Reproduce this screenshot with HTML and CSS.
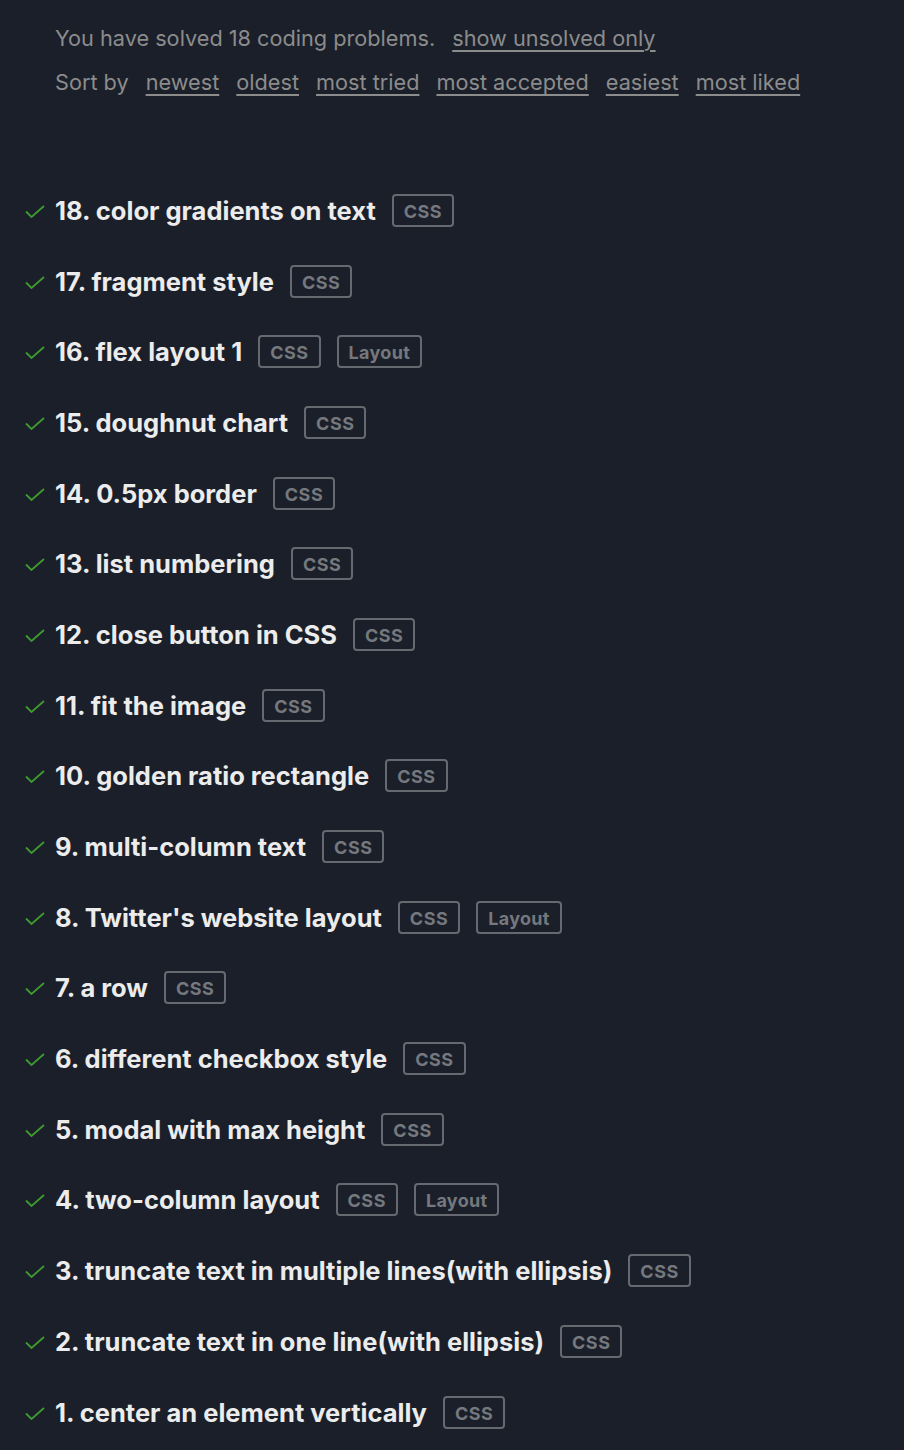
FILE: index.html
```html
<!DOCTYPE html>
<html>
<head>
<meta charset="utf-8">
<link rel="stylesheet" href="styles.css">
</head>
<body>
<div class="page">
  <div class="header">
    <div class="line">
      <span>You have solved 18 coding problems.</span>
      <a class="link" href="#">show unsolved only</a>
    </div>
    <div class="line">
      <span>Sort by</span>
      <a class="link" href="#">newest</a>
      <a class="link" href="#">oldest</a>
      <a class="link" href="#">most tried</a>
      <a class="link" href="#">most accepted</a>
      <a class="link" href="#">easiest</a>
      <a class="link" href="#">most liked</a>
    </div>
  </div>
  <ul class="list">
    <li class="row"><svg class="check" viewBox="0 0 20 13"><path d="M1 6.5 L6.5 12 L19 1"/></svg><span class="title">18. color gradients on text</span><span class="tag">css</span></li>
    <li class="row"><svg class="check" viewBox="0 0 20 13"><path d="M1 6.5 L6.5 12 L19 1"/></svg><span class="title">17. fragment style</span><span class="tag">css</span></li>
    <li class="row"><svg class="check" viewBox="0 0 20 13"><path d="M1 6.5 L6.5 12 L19 1"/></svg><span class="title">16. flex layout 1</span><span class="tag">css</span><span class="tag cap">Layout</span></li>
    <li class="row"><svg class="check" viewBox="0 0 20 13"><path d="M1 6.5 L6.5 12 L19 1"/></svg><span class="title">15. doughnut chart</span><span class="tag">css</span></li>
    <li class="row"><svg class="check" viewBox="0 0 20 13"><path d="M1 6.5 L6.5 12 L19 1"/></svg><span class="title">14. 0.5px border</span><span class="tag">css</span></li>
    <li class="row"><svg class="check" viewBox="0 0 20 13"><path d="M1 6.5 L6.5 12 L19 1"/></svg><span class="title">13. list numbering</span><span class="tag">css</span></li>
    <li class="row"><svg class="check" viewBox="0 0 20 13"><path d="M1 6.5 L6.5 12 L19 1"/></svg><span class="title">12. close button in CSS</span><span class="tag">css</span></li>
    <li class="row"><svg class="check" viewBox="0 0 20 13"><path d="M1 6.5 L6.5 12 L19 1"/></svg><span class="title">11. fit the image</span><span class="tag">css</span></li>
    <li class="row"><svg class="check" viewBox="0 0 20 13"><path d="M1 6.5 L6.5 12 L19 1"/></svg><span class="title">10. golden ratio rectangle</span><span class="tag">css</span></li>
    <li class="row"><svg class="check" viewBox="0 0 20 13"><path d="M1 6.5 L6.5 12 L19 1"/></svg><span class="title">9. multi-column text</span><span class="tag">css</span></li>
    <li class="row"><svg class="check" viewBox="0 0 20 13"><path d="M1 6.5 L6.5 12 L19 1"/></svg><span class="title">8. Twitter's website layout</span><span class="tag">css</span><span class="tag cap">Layout</span></li>
    <li class="row"><svg class="check" viewBox="0 0 20 13"><path d="M1 6.5 L6.5 12 L19 1"/></svg><span class="title">7. a row</span><span class="tag">css</span></li>
    <li class="row"><svg class="check" viewBox="0 0 20 13"><path d="M1 6.5 L6.5 12 L19 1"/></svg><span class="title">6. different checkbox style</span><span class="tag">css</span></li>
    <li class="row"><svg class="check" viewBox="0 0 20 13"><path d="M1 6.5 L6.5 12 L19 1"/></svg><span class="title">5. modal with max height</span><span class="tag">css</span></li>
    <li class="row"><svg class="check" viewBox="0 0 20 13"><path d="M1 6.5 L6.5 12 L19 1"/></svg><span class="title">4. two-column layout</span><span class="tag">css</span><span class="tag cap">Layout</span></li>
    <li class="row"><svg class="check" viewBox="0 0 20 13"><path d="M1 6.5 L6.5 12 L19 1"/></svg><span class="title">3. truncate text in multiple lines(with ellipsis)</span><span class="tag">css</span></li>
    <li class="row"><svg class="check" viewBox="0 0 20 13"><path d="M1 6.5 L6.5 12 L19 1"/></svg><span class="title">2. truncate text in one line(with ellipsis)</span><span class="tag">css</span></li>
    <li class="row"><svg class="check" viewBox="0 0 20 13"><path d="M1 6.5 L6.5 12 L19 1"/></svg><span class="title">1. center an element vertically</span><span class="tag">css</span></li>
  </ul>
</div>
</body>
</html>
```

FILE: styles.css
```css
html, body {
  margin: 0;
  padding: 0;
  background: #1a1f2a;
}
body {
  font-family: Inter, "Noto Sans", sans-serif;
  color: #ececec;
}
.page {
  padding: 16px 0 0 0;
}
.header {
  padding-left: 55px;
  color: #8c8c8c;
  font-size: 21.7px;
}
.line {
  display: flex;
  gap: 17px;
  height: 44px;
  align-items: center;
}
.link {
  color: #8c8c8c;
  text-decoration: underline;
  text-decoration-thickness: 2px;
  text-underline-offset: 4px;
}
.list {
  list-style: none;
  margin: 71px 0 0 0;
  padding: 0 0 0 25px;
}
.row {
  display: flex;
  align-items: center;
  height: 70.7px;
}
.check {
  width: 20px;
  height: 13px;
  margin-right: 10px;
  margin-top: 2px;
  fill: none;
  stroke: #3f9b2f;
  stroke-width: 1.8;
}
.title {
  font-size: 25.5px;
  font-weight: 700;
  color: #ececec;
  margin-right: 16px;
}
.tag {
  box-sizing: border-box;
  height: 33px;
  padding: 2px 10px 0;
  border: 2px solid #666a70;
  border-radius: 4px;
  color: #75787d;
  font-size: 18px;
  font-weight: 700;
  letter-spacing: 0.5px;
  text-transform: uppercase;
  display: flex;
  align-items: center;
  margin-right: 16px;
}
.tag.cap {
  text-transform: none;
  font-size: 18px;
  letter-spacing: 0.3px;
}
```
